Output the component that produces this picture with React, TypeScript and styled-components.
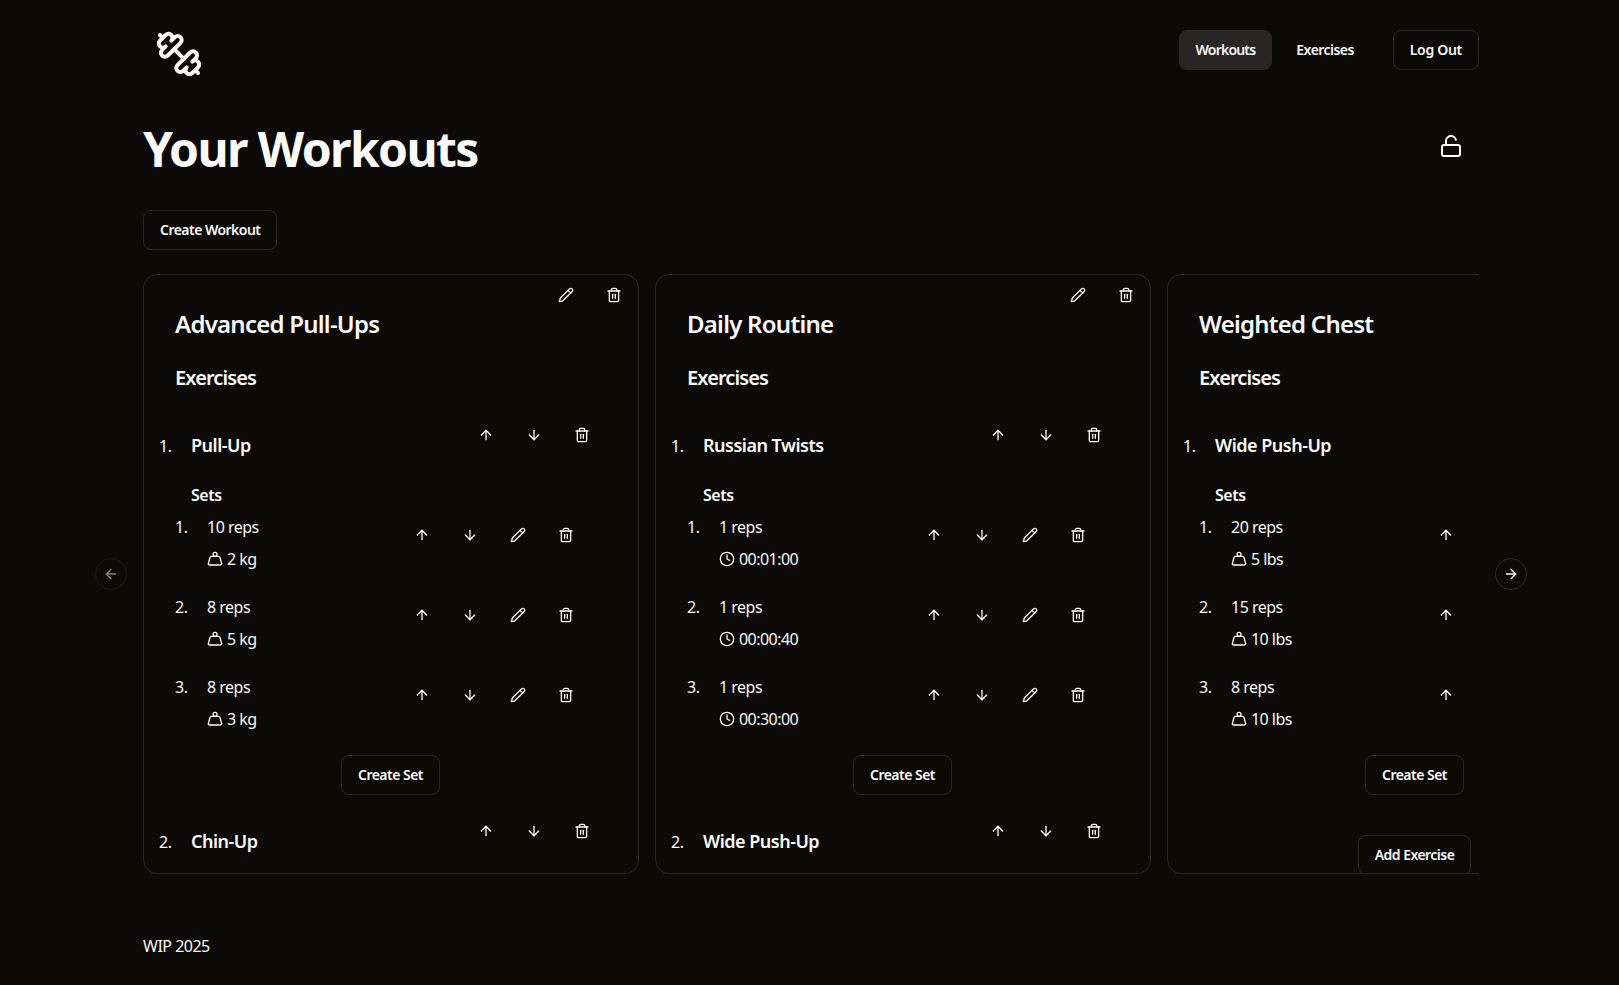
import React from "react";
import styled, { createGlobalStyle } from "styled-components";
import { ArrowDown, ArrowLeft, ArrowRight, ArrowUp, Clock, Dumbbell, LockOpen, Pencil, Trash2, Weight } from "lucide-react";

const Global = createGlobalStyle`
  html, body { margin: 0; padding: 0; background: #0c0a09; color: #fafaf9; font-family: "Noto Sans", "Open Sans", sans-serif; }
  * { box-sizing: border-box; }
  button { font-family: inherit; }
`;

const Page = styled.div`
  margin: 0 140px 0 143px;
  height: 985px;
  overflow: visible;
`;
const Header = styled.header`
  display: flex;
  justify-content: space-between;
  align-items: flex-start;
  padding-top: 30px;
  height: 102px;
`;
const Logo = styled(Dumbbell)`
  margin-left: 12px;
  transform: scaleX(-1);
  display: block;
`;
const Nav = styled.nav`
  display: flex;
  align-items: center;
`;
const Button = styled.button<{ $active?: boolean; $ghost?: boolean }>`
  height: 40px;
  padding: 0 16px 2px;
  border-radius: 8px;
  border: 1px solid ${(p) => (p.$ghost && !p.$active ? "transparent" : "#292524")};
  background: ${(p) => (p.$active ? "#292524" : "transparent")};
  color: #fafaf9;
  font-size: 14px;
  font-weight: 600;
  letter-spacing: -0.53px;
  white-space: nowrap;
  flex-shrink: 0;
`;
const NavLink = styled(Button)`
  margin-right: 7px;
  letter-spacing: -0.8px;
  &:nth-child(2) {
    margin-right: 22px;
    letter-spacing: -0.55px;
  }
`;
const LogOut = styled(Button)`
  letter-spacing: -0.3px;
`;
const TitleRow = styled.div`
  display: flex;
  justify-content: space-between;
  align-items: center;
  height: 78px;
  padding-top: 16px;
`;
const PageTitle = styled.h1`
  margin: 0;
  font-size: 48px;
  line-height: 60px;
  font-weight: 700;
  letter-spacing: -1.6px;
`;
const LockBtn = styled.button`
  background: none;
  border: 0;
  padding: 0;
  color: #fafaf9;
  margin-right: 16px;
  margin-top: -6px;
  display: flex;
`;
const Toolbar = styled.div`
  padding-top: 30px;
  height: 94px;
`;
const Carousel = styled.div`
  position: relative;
  height: 600px;
`;
const Viewport = styled.div`
  display: flex;
  gap: 16px;
  overflow: hidden;
  height: 100%;
`;
const Card = styled.section`
  position: relative;
  flex: 0 0 496px;
  height: 600px;
  border: 1px solid #292524;
  border-radius: 14px;
  overflow: hidden;
  padding: 33px 16px 0 15px;
`;
const CardActions = styled.div`
  position: absolute;
  top: 0;
  right: 4px;
  display: flex;
  gap: 8px;
`;
const IconBtn = styled.button`
  width: 40px;
  height: 40px;
  border: 0;
  background: none;
  color: #fafaf9;
  display: flex;
  align-items: center;
  justify-content: center;
  padding: 0;
  flex-shrink: 0;
`;
const CardTitle = styled.h2`
  margin: 0 0 24px 16px;
  font-size: 24px;
  line-height: 32px;
  font-weight: 600;
  letter-spacing: -0.75px;
`;
const SectionTitle = styled.h3`
  margin: 0 0 23px 16px;
  font-size: 20px;
  line-height: 28px;
  font-weight: 600;
  letter-spacing: -0.9px;
`;
const ExerciseItem = styled.div`
  margin-bottom: 16px;
`;
const ExerciseHead = styled.div`
  display: flex;
  align-items: flex-start;
  padding-right: 20px;
`;
const Num = styled.span`
  flex: 0 0 32px;
  font-size: 16px;
  line-height: 24px;
  letter-spacing: -0.3px;
`;
const ExerciseNum = styled(Num)`
  margin-top: 19px;
`;
const ExerciseName = styled.div`
  flex: 1;
  margin-top: 16px;
  font-size: 18px;
  line-height: 28px;
  font-weight: 600;
  letter-spacing: -0.5px;
`;
const RowActions = styled.div`
  display: flex;
  gap: 8px;
`;
const SetsLabel = styled.div`
  margin: 24px 0 8px 32px;
  font-size: 16px;
  line-height: 24px;
  font-weight: 600;
  letter-spacing: -0.5px;
`;
const SetList = styled.div`
  display: flex;
  flex-direction: column;
  gap: 24px;
  padding: 0 36px 0 16px;
`;
const SetRow = styled.div`
  display: flex;
  align-items: flex-start;
`;
const SetNum = styled(Num)``;
const SetInfo = styled.div`
  flex: 1;
  display: flex;
  flex-direction: column;
  gap: 8px;
  font-size: 16px;
  line-height: 24px;
  letter-spacing: -0.5px;
`;
const Metric = styled.div`
  display: flex;
  align-items: center;
  gap: 4px;
  letter-spacing: -0.55px;
`;
const CreateRow = styled.div<{ $gap: number }>`
  display: flex;
  justify-content: center;
  margin-top: ${(p) => p.$gap}px;
`;
const NavArrow = styled.button<{ $side: "left" | "right"; $dim?: boolean }>`
  position: absolute;
  top: 284px;
  ${(p) => p.$side}: -48px;
  width: 32px;
  height: 32px;
  border-radius: 50%;
  border: 1px solid #292524;
  background: transparent;
  color: #fafaf9;
  display: flex;
  align-items: center;
  justify-content: center;
  padding: 0;
  opacity: ${(p) => (p.$dim ? 0.5 : 1)};
`;
const Footer = styled.footer`
  margin-top: 60px;
  font-size: 16px;
  line-height: 24px;
  letter-spacing: -0.5px;
`;

type SetT = { reps: string; metric: string; kind: "w" | "t" };
type Ex = { name: string; sets?: SetT[] };
type W = { title: string; exercises: Ex[] };

const w = (reps: string, metric: string): SetT => ({ reps, metric, kind: "w" });
const t = (metric: string): SetT => ({ reps: "1 reps", metric, kind: "t" });

const workouts: W[] = [
  {
    title: "Advanced Pull-Ups",
    exercises: [
      { name: "Pull-Up", sets: [w("10 reps", "2 kg"), w("8 reps", "5 kg"), w("8 reps", "3 kg")] },
      { name: "Chin-Up" },
    ],
  },
  {
    title: "Daily Routine",
    exercises: [
      { name: "Russian Twists", sets: [t("00:01:00"), t("00:00:40"), t("00:30:00")] },
      { name: "Wide Push-Up" },
    ],
  },
  {
    title: "Weighted Chest",
    exercises: [{ name: "Wide Push-Up", sets: [w("20 reps", "5 lbs"), w("15 reps", "10 lbs"), w("8 reps", "10 lbs")] }],
  },
];

function WorkoutCard({ workout }: { workout: W }) {
  return (
    <Card>
      <CardActions>
        <IconBtn><Pencil size={16} /></IconBtn>
        <IconBtn><Trash2 size={16} /></IconBtn>
      </CardActions>
      <CardTitle>{workout.title}</CardTitle>
      <SectionTitle>Exercises</SectionTitle>
      {workout.exercises.map((ex, i) => (
        <ExerciseItem key={ex.name}>
          <ExerciseHead>
            <ExerciseNum>{i + 1}.</ExerciseNum>
            <ExerciseName>{ex.name}</ExerciseName>
            <RowActions>
              <IconBtn><ArrowUp size={16} /></IconBtn>
              <IconBtn><ArrowDown size={16} /></IconBtn>
              <IconBtn><Trash2 size={16} /></IconBtn>
            </RowActions>
          </ExerciseHead>
          {ex.sets && (
            <>
              <SetsLabel>Sets</SetsLabel>
              <SetList>
                {ex.sets.map((s, j) => (
                  <SetRow key={j}>
                    <SetNum>{j + 1}.</SetNum>
                    <SetInfo>
                      <div>{s.reps}</div>
                      <Metric>
                        {s.kind === "w" ? <Weight size={16} /> : <Clock size={16} />}
                        {s.metric}
                      </Metric>
                    </SetInfo>
                    <RowActions>
                      <IconBtn><ArrowUp size={16} /></IconBtn>
                      <IconBtn><ArrowDown size={16} /></IconBtn>
                      <IconBtn><Pencil size={16} /></IconBtn>
                      <IconBtn><Trash2 size={16} /></IconBtn>
                    </RowActions>
                  </SetRow>
                ))}
              </SetList>
              <CreateRow $gap={24}><Button>Create Set</Button></CreateRow>
            </>
          )}
        </ExerciseItem>
      ))}
      {workout.exercises.length === 1 && (
        <CreateRow $gap={40}><Button>Add Exercise</Button></CreateRow>
      )}
    </Card>
  );
}

export default function App() {
  return (
    <>
      <Global />
      <Page>
        <Header>
          <Logo size={48} />
          <Nav>
            <NavLink $ghost $active>Workouts</NavLink>
            <NavLink $ghost>Exercises</NavLink>
            <LogOut>Log Out</LogOut>
          </Nav>
        </Header>
        <TitleRow>
          <PageTitle>Your Workouts</PageTitle>
          <LockBtn><LockOpen size={24} /></LockBtn>
        </TitleRow>
        <Toolbar><Button>Create Workout</Button></Toolbar>
        <Carousel>
          <Viewport>
            {workouts.map((wk) => <WorkoutCard key={wk.title} workout={wk} />)}
          </Viewport>
          <NavArrow $side="left" $dim><ArrowLeft size={16} /></NavArrow>
          <NavArrow $side="right"><ArrowRight size={16} /></NavArrow>
        </Carousel>
        <Footer>WIP 2025</Footer>
      </Page>
    </>
  );
}
